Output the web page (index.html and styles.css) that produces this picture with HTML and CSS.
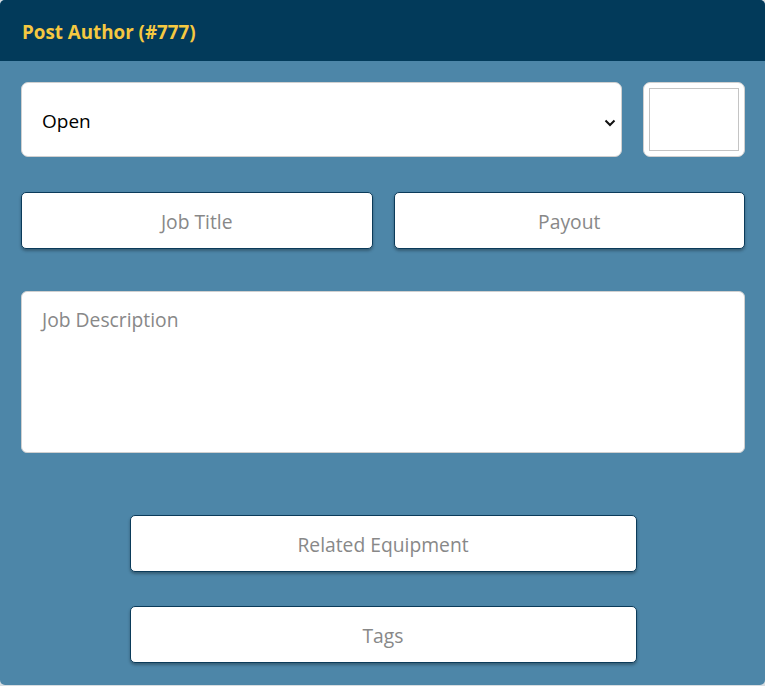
FILE: index.html
```html
<!DOCTYPE html>
<html>
<head>
<meta charset="utf-8">
<link rel="stylesheet" href="styles.css">
</head>
<body>
<div class="panel">
  <div class="panel-header"><h1 class="title">Post Author (#777)</h1></div>
  <div class="panel-body">
    <div class="row-top">
      <div class="select-wrap">
        <select class="status">
          <option>Open</option>
          <option>Closed</option>
        </select>
        <svg class="chev" width="12" height="8" viewBox="0 0 12 8"><path d="M1.5 1.5 L6 6 L10.5 1.5" fill="none" stroke="#111" stroke-width="2"/></svg>
      </div>
      <div class="color-box"><div class="color-inner"></div></div>
    </div>
    <div class="row-two">
      <input class="field" type="text" placeholder="Job Title">
      <input class="field" type="text" placeholder="Payout">
    </div>
    <textarea class="desc" placeholder="Job Description"></textarea>
    <input class="field wide first" type="text" placeholder="Related Equipment">
    <input class="field wide second" type="text" placeholder="Tags">
  </div>
</div>
</body>
</html>
```
FILE: styles.css
```css
* { box-sizing: border-box; }
html, body { margin: 0; padding: 0; background: #d7dde1; }
body { font-family: "Open Sans", "Noto Sans", sans-serif; width: 765px; height: 686px; }
.panel {
  width: 765px;
  border-radius: 5px;
  overflow: hidden;
  background: #4d86a8;
}
.panel-header {
  height: 61px;
  background: #023a5a;
  display: flex;
  align-items: center;
  padding-left: 22px;
  padding-top: 2px;
}
.title {
  margin: 0;
  font-size: 18.8px;
  font-weight: 700;
  color: #f5c841;
}
.panel-body {
  padding: 21px 20px 22px 21px;
  display: flex;
  flex-direction: column;
}
.row-top { display: flex; gap: 21px; height: 75px; }
.select-wrap { position: relative; flex: 1; }
.status {
  appearance: none;
  -webkit-appearance: none;
  width: 100%;
  height: 75px;
  border: 1px solid #d0d0d0;
  border-radius: 7px;
  background: #fff;
  font-family: inherit;
  font-size: 19px;
  color: #000;
  padding: 2px 20px 0;
}
.chev { position: absolute; right: 6px; top: 37px; }
.color-box {
  width: 102px;
  height: 75px;
  background: #fff;
  border: 1px solid #d0d0d0;
  border-radius: 7px;
  padding: 5px 5px;
}
.color-inner { width: 100%; height: 100%; border: 1px solid #c4c4c4; }
.row-two { display: flex; gap: 21px; margin-top: 35px; }
.field {
  height: 57px;
  border: 1px solid #0b3b5a;
  border-radius: 5px;
  background: #fff;
  box-shadow: 0 2px 3px rgba(0, 0, 0, 0.3);
  font-family: inherit;
  font-size: 19.3px;
  text-align: center;
  color: #333;
  outline: none;
  padding: 2px 2px 0;
}
.row-two .field { flex: 1; width: 0; }
.field::placeholder, .desc::placeholder { color: #888; }
.desc {
  margin-top: 42px;
  height: 162px;
  border: 1px solid #d0d0d0;
  border-radius: 6px;
  background: #fff;
  resize: none;
  font-family: inherit;
  font-size: 19.3px;
  padding: 14px 20px;
  outline: none;
}
.wide { width: 507px; align-self: center; }
.first { margin-top: 62px; }
.second { margin-top: 34px; }
```
